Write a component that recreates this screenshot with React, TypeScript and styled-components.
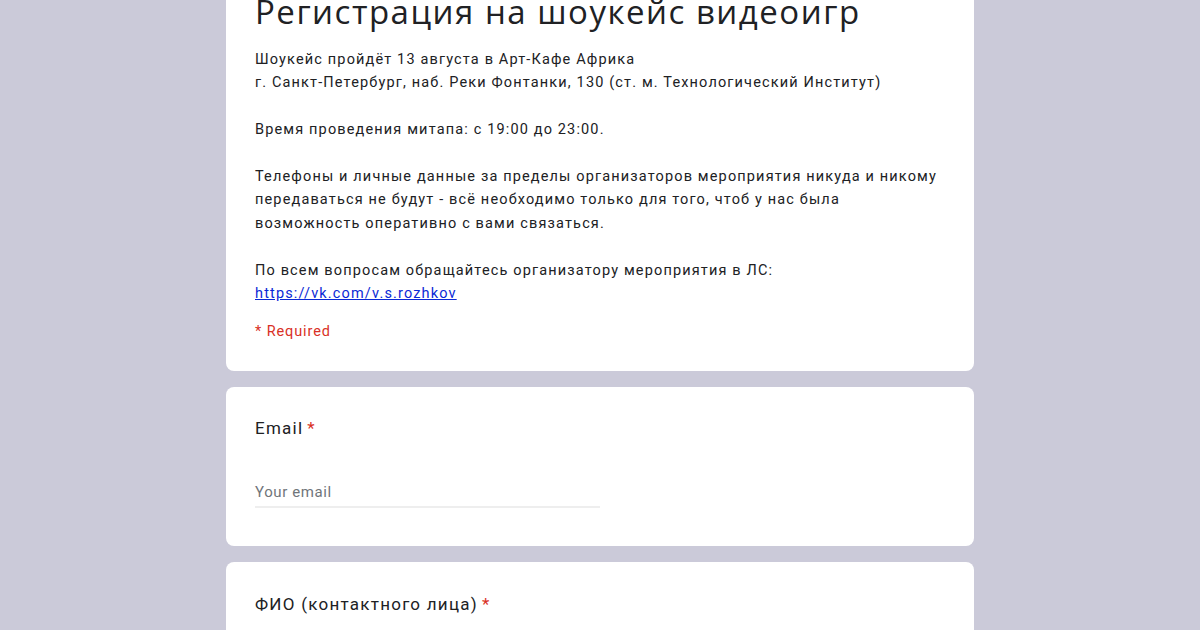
import React from "react";
import styled, { createGlobalStyle } from "styled-components";

const GlobalStyle = createGlobalStyle`
  html, body {
    margin: 0;
    padding: 0;
    background: #cbcad9;
  }
  body {
    font-family: Roboto, "Noto Sans", Arial, sans-serif;
    color: #202124;
  }
`;

const Page = styled.div`
  width: 748px;
  margin: 0 auto;
  display: flex;
  flex-direction: column;
  gap: 16px;
  margin-top: -32px;
`;

const Card = styled.div<{ $pad?: string }>`
  background: #fff;
  border-radius: 8px;
  padding: ${(p) => p.$pad || "24px 28px"};
`;

const Title = styled.h1`
  margin: 0;
  font-family: "Open Sans", Roboto, sans-serif;
  font-weight: 400;
  font-size: 33px;
  line-height: 40px;
  letter-spacing: 1.5px;
  color: #202124;
`;

const Description = styled.div`
  margin-top: 16px;
  font-size: 14.5px;
  line-height: 23.4px;
  letter-spacing: 1.15px;
  color: #202124;
  white-space: pre-wrap;

  a {
    color: #0b29d6;
  }
`;

const Required = styled.div`
  margin-top: 17px;
  font-size: 14.5px;
  line-height: 20px;
  letter-spacing: 0.9px;
  color: #d93025;
`;

const Label = styled.div`
  font-size: 17px;
  line-height: 24px;
  letter-spacing: 1.25px;
  color: #202124;
`;

const Star = styled.span`
  color: #d93025;
  margin-left: 4px;
`;

const Input = styled.div`
  margin-top: 40px;
  width: 345px;
  padding: 1px 0 3px;
  border-bottom: 2px solid #eeeeee;
  font-size: 15px;
  line-height: 22px;
  letter-spacing: 0.6px;
  color: #70757a;
`;

export default function App() {
  return (
    <>
      <GlobalStyle />
      <Page>
        <Card $pad="24px 34px 29px 29px">
          <Title>Регистрация на шоукейс видеоигр</Title>
          <Description>
            {"Шоукейс пройдёт 13 августа в Арт-Кафе Африка\nг. Санкт-Петербург, наб. Реки Фонтанки, 130 (ст. м. Технологический Институт)\n\nВремя проведения митапа: с 19:00 до 23:00.\n\nТелефоны и личные данные за пределы организаторов мероприятия никуда и никому передаваться не будут - всё необходимо только для того, чтоб у нас была возможность оперативно с вами связаться.\n\nПо всем вопросам обращайтесь организатору мероприятия в ЛС:\n"}
            <a href="#">https://vk.com/v.s.rozhkov</a>
          </Description>
          <Required>* Required</Required>
        </Card>
        <Card $pad="29px 28px 38px 29px">
          <Label>
            Email<Star>*</Star>
          </Label>
          <Input>Your email</Input>
        </Card>
        <Card $pad="30px 28px 38px 29px">
          <Label>
            ФИО (контактного лица)<Star>*</Star>
          </Label>
        </Card>
      </Page>
    </>
  );
}
